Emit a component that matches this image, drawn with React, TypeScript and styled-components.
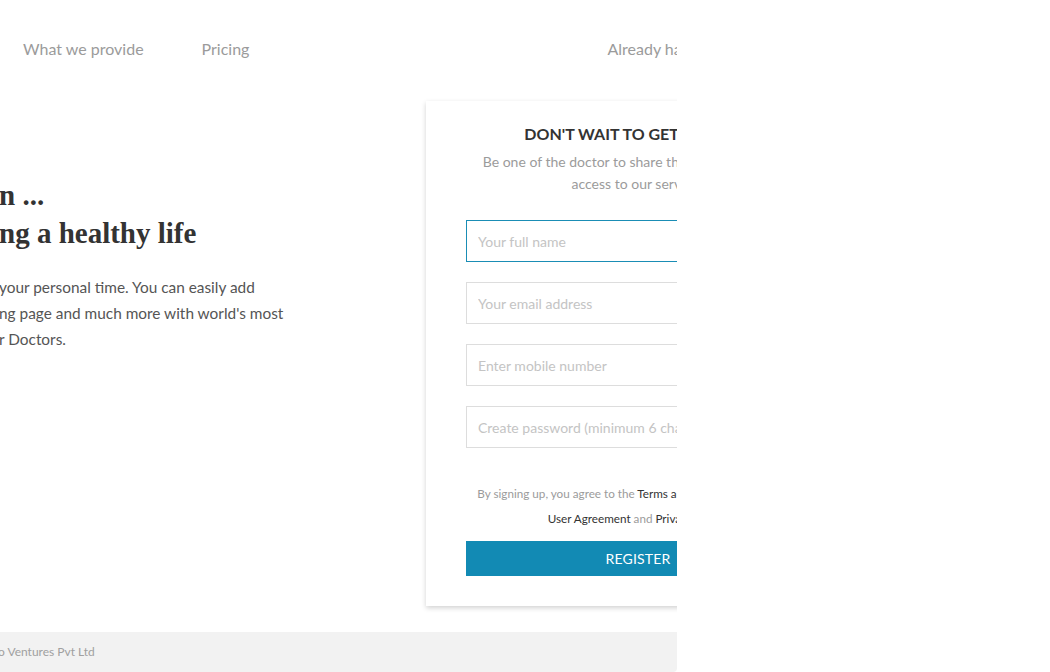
import React from "react";
import styled, { createGlobalStyle } from "styled-components";

const GlobalStyle = createGlobalStyle`
  html, body { margin: 0; padding: 0; background: #ffffff; }
  body { font-family: Lato, "Open Sans", sans-serif; }
  * { box-sizing: border-box; }
`;

const Frame = styled.div`
  width: 677px;
  height: 672px;
  overflow: hidden;
  display: flex;
  flex-direction: column;
  background: #ffffff;
`;

const Nav = styled.nav`
  height: 98px;
  flex-shrink: 0;
  display: flex;
  align-items: center;
  padding-left: 23px;
  padding-bottom: 2px;
  white-space: nowrap;
`;

const NavLink = styled.a<{ $gap?: number }>`
  font-size: 16px;
  color: #9b9b9b;
  text-decoration: none;
  margin-left: ${(p) => p.$gap ?? 0}px;
`;

const Main = styled.main`
  display: flex;
  align-items: flex-start;
  padding-top: 3px;
  flex-shrink: 0;
`;

const Hero = styled.section`
  width: 426px;
  flex-shrink: 0;
  padding-top: 75px;
  white-space: nowrap;
`;

const Heading = styled.h1`
  margin: 0 0 0 -1px;
  font-family: "Liberation Serif", "DejaVu Serif", serif;
  font-weight: 700;
  font-size: 29px;
  line-height: 38px;
  color: #333333;
`;

const HeadLine = styled.span`
  display: block;
`;

const Lead = styled.p`
  margin: 22px 0 0 -1px;
  font-size: 15.4px;
  line-height: 26px;
  color: #555555;
`;

const LeadLine = styled.span`
  display: block;
`;

const Card = styled.div`
  width: 424px;
  flex-shrink: 0;
  padding: 23px 40px 30px;
  background: #ffffff;
  box-shadow: 0 2px 5px rgba(0, 0, 0, 0.18);
  text-align: center;
  white-space: nowrap;
`;

const CardTitle = styled.h2`
  margin: 0;
  font-size: 16px;
  line-height: 20px;
  font-weight: 700;
  color: #333333;
`;

const CardSub = styled.p`
  margin: 7px 0 0;
  font-size: 14px;
  line-height: 22px;
  color: #9b9b9b;
`;

const Form = styled.form`
  margin-top: 25px;
  display: flex;
  flex-direction: column;
  gap: 20px;
`;

const Input = styled.input<{ $active?: boolean }>`
  height: 42px;
  width: 100%;
  padding: 0 11px;
  font-family: Lato, sans-serif;
  font-size: 14px;
  color: #333;
  border: 1px solid ${(p) => (p.$active ? "#1a8db5" : "#dddddd")};
  border-radius: 0;
  outline: none;
  background: #fff;
  &::placeholder { color: #c4c4c4; }
`;

const Terms = styled.p`
  margin: 33px 0 0;
  font-size: 11.7px;
  line-height: 25px;
  color: #9b9b9b;
`;

const TermLink = styled.a`
  color: #333333;
  text-decoration: none;
`;

const RegisterButton = styled.button`
  margin-top: 10px;
  width: 100%;
  height: 35px;
  border: none;
  background: #128ab4;
  color: #ffffff;
  font-family: Lato, sans-serif;
  font-size: 14px;
  letter-spacing: 0.2px;
  text-transform: uppercase;
  cursor: pointer;
`;

const Footer = styled.footer`
  margin-top: 26px;
  height: 40px;
  flex-shrink: 0;
  background: #f2f2f2;
  border-bottom-right-radius: 4px;
  display: flex;
  align-items: center;
  padding-bottom: 1px;
  font-size: 12px;
  color: #a0a0a0;
  white-space: nowrap;
`;

const FooterText = styled.span`
  margin-left: -2px;
`;

export default function App() {
  return (
    <>
      <GlobalStyle />
      <Frame>
        <Nav>
          <NavLink href="#">What we provide</NavLink>
          <NavLink href="#" $gap={58}>Pricing</NavLink>
          <NavLink href="#" $gap={358}>Already have an account? Login</NavLink>
        </Nav>
        <Main>
          <Hero>
            <Heading>
              <HeadLine>n ...</HeadLine>
              <HeadLine>ng a healthy life</HeadLine>
            </Heading>
            <Lead>
              <LeadLine>your personal time. You can easily add</LeadLine>
              <LeadLine>ng page and much more with world's most</LeadLine>
              <LeadLine>r Doctors.</LeadLine>
            </Lead>
          </Hero>
          <Card>
            <CardTitle>DON'T WAIT TO GET STARTED</CardTitle>
            <CardSub>
              Be one of the doctor to share this platform and get
              <br />
              access to our services
            </CardSub>
            <Form onSubmit={(e) => e.preventDefault()}>
              <Input $active placeholder="Your full name" />
              <Input placeholder="Your email address" />
              <Input placeholder="Enter mobile number" />
              <Input type="password" placeholder="Create password (minimum 6 characters)" />
            </Form>
            <Terms>
              By signing up, you agree to the <TermLink href="#">Terms and Conditions of Usage</TermLink>,
              <br />
              <TermLink href="#">User Agreement</TermLink> and <TermLink href="#">Privacy Policy</TermLink>.
            </Terms>
            <RegisterButton type="button">Register</RegisterButton>
          </Card>
        </Main>
        <Footer>
          <FooterText>o Ventures Pvt Ltd</FooterText>
        </Footer>
      </Frame>
    </>
  );
}
